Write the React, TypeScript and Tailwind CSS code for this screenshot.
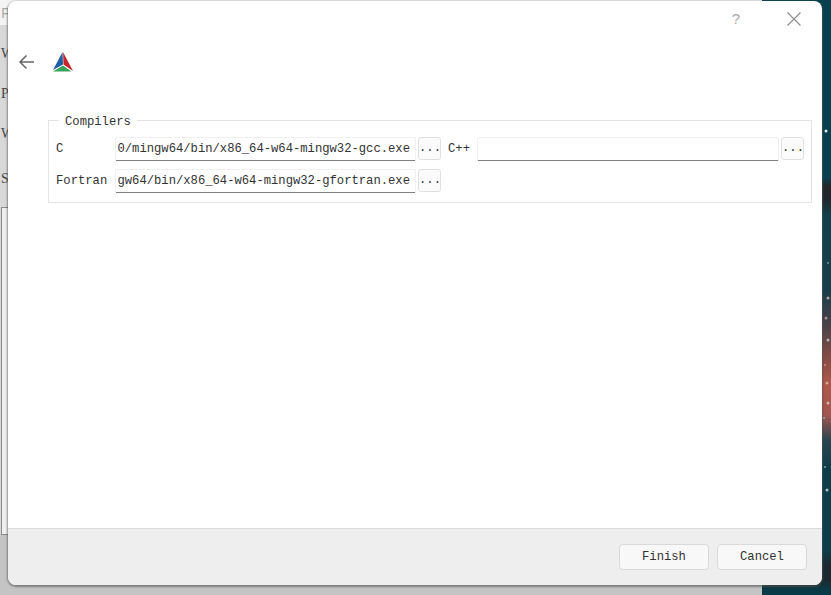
const mono = "font-['Liberation_Mono',monospace] text-[12.2px] text-[#333333]";

const specks = [
  [826, 131, 3, "#dfe9ea"], [828, 263, 2, "#6f8f95"], [828, 298, 3, "#b5a3a6"], [826, 318, 3, "#a78e90"],
  [828, 340, 3, "#afb3b5"], [825, 365, 2, "#c89080"], [827, 383, 3, "#d0a795"], [828, 403, 3, "#cfb9af"],
  [824, 418, 2, "#a8b0b2"], [825, 467, 2, "#88a2a6"], [827, 490, 3, "#afc0c2"],
];

const BackArrow = () => (
  <svg width="18" height="16" viewBox="0 0 18 16" fill="none" stroke="#666666" strokeWidth="1.5">
    <path d="M16 8H2M8.5 1.5 2 8l6.5 6.5" />
  </svg>
);

const Logo = () => (
  <svg width="20" height="20" viewBox="0 0 20 20">
    <path d="M9.5 0 0 18 10 12.5Z" fill="#1f5fa8" />
    <path d="M10 0 20 19 10.5 12.5Z" fill="#c8242c" />
    <path d="M0 19.5 10 13.5 18.5 19.5Z" fill="#3aa35a" />
  </svg>
);

const Dots = () => (
  <button className={`ml-[2px] h-[23px] w-[23px] shrink-0 self-start rounded-[3px] border border-[#e0e0e0] bg-[#fbfbfb] leading-none ${mono}`}>
    ...
  </button>
);

const PathInput = ({ value, className }: { value: string; className: string }) => (
  <div className={`flex h-[24px] shrink-0 items-center justify-end rounded-t-[3px] border border-b-0 border-[#f0f0f0] bg-white shadow-[inset_0_-1px_0_#808080] ${className}`}>
    <span className={`whitespace-nowrap pr-[5px] ${mono}`}>{value}</span>
  </div>
);

const FooterButton = ({ label }: { label: string }) => (
  <button className={`h-[26px] w-[90px] rounded-[4px] border border-[#d9d9d9] bg-[#f8f8f8] pt-[1px] ${mono}`}>
    {label}
  </button>
);

export default function App() {
  return (
    <div className="relative flex h-[595px] w-[831px] overflow-hidden">
      {/* window behind the dialog */}
      <div className="flex w-[762px] flex-col bg-[#c4c4c4]">
        <div className="h-[25px] bg-[#f3f3f3] pl-[1px] pt-[4px] font-['Liberation_Mono',monospace] text-[14px] text-[#aaaaaa]">Fi</div>
        <div className="flex h-[510px] flex-col bg-[#d8d8d8]">
          <div className="flex flex-col pl-[1px] pt-[22px] font-['Liberation_Serif',serif] text-[14px] leading-[14px] text-[#444444]">
            <span>W</span>
            <span className="mt-[26px]">P</span>
            <span className="mt-[26px]">W</span>
            <span className="mt-[31px]">S</span>
          </div>
          <div className="ml-[1px] mt-[21px] flex-1 border border-[#8a8a8a] bg-[#f0f0f0]" />
        </div>
      </div>

      {/* wallpaper */}
      <div className="flex-1 bg-[linear-gradient(180deg,#07404e_0px,#07404e_178px,#20262a_186px,#20262a_198px,#123f4c_215px,#173f4b_290px,#4a4249_325px,#8a4d45_360px,#b0584a_385px,#a2564f_415px,#2a4650_440px,#0b3d4a_470px,#0b3d4a_550px,#1c2a30_565px,#1c2a30_580px,#0a3b48_590px)]" />
      <svg className="absolute left-0 top-0" width="831" height="595">
        {specks.map(([x, y, r, c], i) => (
          <circle key={i} cx={x as number} cy={y as number} r={(r as number) / 2} fill={c as string} />
        ))}
      </svg>

      {/* dialog */}
      <div className="absolute left-[8px] top-[1px] flex h-[584px] w-[814px] flex-col overflow-hidden rounded-[8px] bg-white shadow-[0_1px_2px_1px_rgba(80,80,80,0.6)]">
        <div className="flex h-[34px] items-start justify-end pr-[21px] pt-[9px]">
          <span className="mr-[47px] font-['Liberation_Sans',sans-serif] text-[15px] leading-[17px] text-[#a8a8a8]">?</span>
          <svg className="mt-[2px]" width="14" height="14" viewBox="0 0 14 14" stroke="#8c8c8c" strokeWidth="1.1">
            <path d="M0.5 0.5 13.5 13.5M13.5 0.5 0.5 13.5" />
          </svg>
        </div>

        <div className="flex items-center gap-[17px] pl-[10px] pt-[17px]">
          <BackArrow />
          <Logo />
        </div>

        <div className="relative ml-[40px] mr-[10px] mt-[48px] flex flex-col gap-[8px] border border-[#e4e4e4] pb-[9px] pl-[7px] pt-[16px]">
          <span className={`absolute left-[10px] top-[-6px] bg-white px-[6px] leading-[15px] ${mono}`}>Compilers</span>
          <div className="flex items-center">
            <span className={`w-[59px] shrink-0 ${mono}`}>C</span>
            <PathInput className="w-[301px]" value="0/mingw64/bin/x86_64-w64-mingw32-gcc.exe" />
            <Dots />
            <span className={`ml-[7px] w-[29px] shrink-0 ${mono}`}>C++</span>
            <PathInput className="w-[302px]" value="" />
            <Dots />
          </div>
          <div className="flex items-center">
            <span className={`w-[59px] shrink-0 ${mono}`}>Fortran</span>
            <PathInput className="w-[301px]" value="gw64/bin/x86_64-w64-mingw32-gfortran.exe" />
            <Dots />
          </div>
        </div>

        <div className="mt-auto flex h-[57px] items-center justify-end gap-[8px] border-t border-[#dcdcdc] bg-[#eeeeee] pr-[15px]">
          <FooterButton label="Finish" />
          <FooterButton label="Cancel" />
        </div>
      </div>
    </div>
  );
}
